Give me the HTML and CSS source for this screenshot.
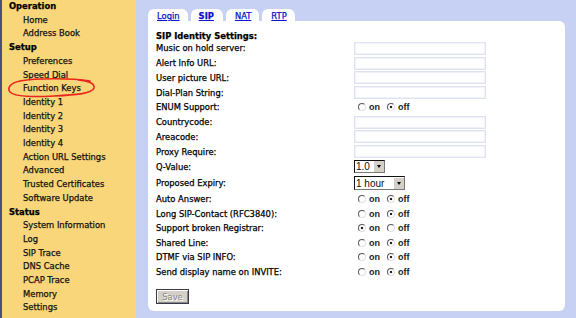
FILE: index.html
```html
<!DOCTYPE html>
<html lang="en">
<head>
    <meta charset="UTF-8">
    <title>SIP Identity Settings</title>
    <link rel="stylesheet" href="styles.css">
</head>
<body>
    <div class="page">
        <nav class="sidebar">
            <div class="group">Operation</div>
            <a class="item">Home</a>
            <a class="item">Address Book</a>
            <div class="group">Setup</div>
            <a class="item">Preferences</a>
            <a class="item">Speed Dial</a>
            <a class="item">Function Keys</a>
            <a class="item">Identity 1</a>
            <a class="item">Identity 2</a>
            <a class="item">Identity 3</a>
            <a class="item">Identity 4</a>
            <a class="item">Action URL Settings</a>
            <a class="item">Advanced</a>
            <a class="item">Trusted Certificates</a>
            <a class="item">Software Update</a>
            <div class="group">Status</div>
            <a class="item">System Information</a>
            <a class="item">Log</a>
            <a class="item">SIP Trace</a>
            <a class="item">DNS Cache</a>
            <a class="item">PCAP Trace</a>
            <a class="item">Memory</a>
            <a class="item">Settings</a>

            <!-- hand drawn marker around Function Keys -->
            <svg class="marker" width="92" height="24" viewBox="0 0 92 24">
                <path d="M84 5 C66 2 30 2 14 5 C4 7 1 12 4 16 C9 21 30 21 48 20 C68 19 86 18 88 12 C89 7 82 5 72 4" fill="none" stroke="#e8261c" stroke-width="1.6" stroke-linecap="round"/>
            </svg>
        </nav>

        <main class="content">
            <div class="tabs">
                <a class="tab">Login</a>
                <a class="tab active">SIP</a>
                <a class="tab">NAT</a>
                <a class="tab">RTP</a>
            </div>

            <div class="panel">
                <h2>SIP Identity Settings:</h2>

                <div class="row"><label>Music on hold server:</label><input class="field" type="text"></div>
                <div class="row"><label>Alert Info URL:</label><input class="field" type="text"></div>
                <div class="row"><label>User picture URL:</label><input class="field" type="text"></div>
                <div class="row"><label>Dial-Plan String:</label><input class="field" type="text"></div>
                <div class="row"><label>ENUM Support:</label>
                    <span class="choice"><input type="radio" name="enum"><span class="on">on</span><input type="radio" name="enum" checked><span>off</span></span>
                </div>
                <div class="row"><label>Countrycode:</label><input class="field" type="text"></div>
                <div class="row"><label>Areacode:</label><input class="field" type="text"></div>
                <div class="row"><label>Proxy Require:</label><input class="field" type="text"></div>
                <div class="row q"><label>Q-Value:</label>
                    <span class="select small"><span>1.0</span><i></i></span>
                </div>
                <div class="row exp"><label>Proposed Expiry:</label>
                    <span class="select wide"><span>1 hour</span><i></i></span>
                </div>
                <div class="row"><label>Auto Answer:</label>
                    <span class="choice"><input type="radio" name="auto"><span class="on">on</span><input type="radio" name="auto" checked><span>off</span></span>
                </div>
                <div class="row"><label>Long SIP-Contact (RFC3840):</label>
                    <span class="choice"><input type="radio" name="long"><span class="on">on</span><input type="radio" name="long" checked><span>off</span></span>
                </div>
                <div class="row"><label>Support broken Registrar:</label>
                    <span class="choice"><input type="radio" name="reg" checked><span class="on">on</span><input type="radio" name="reg"><span>off</span></span>
                </div>
                <div class="row"><label>Shared Line:</label>
                    <span class="choice"><input type="radio" name="shared"><span class="on">on</span><input type="radio" name="shared" checked><span>off</span></span>
                </div>
                <div class="row"><label>DTMF via SIP INFO:</label>
                    <span class="choice"><input type="radio" name="dtmf"><span class="on">on</span><input type="radio" name="dtmf" checked><span>off</span></span>
                </div>
                <div class="row"><label>Send display name on INVITE:</label>
                    <span class="choice"><input type="radio" name="disp"><span class="on">on</span><input type="radio" name="disp" checked><span>off</span></span>
                </div>

                <button class="save" disabled>Save</button>
            </div>
        </main>
    </div>
</body>
</html>
```

FILE: styles.css
```css
body {
    margin: 0;
    font-family: 'DejaVu Sans', Verdana, sans-serif;
    font-size: 8.4px;
    color: #000;
    -webkit-text-stroke: 0.25px currentColor;
}

.page {
    display: flex;
    width: 576px;
    height: 318px;
    overflow: hidden;
}

/* left menu */
.sidebar {
    position: relative;
    width: 134px;
    flex-shrink: 0;
    background-color: #f9d67a;
    border-left: 2px solid #46507a;
}

.group,
.item {
    display: block;
    line-height: 13.7px;
    white-space: nowrap;
}

.group {
    font-weight: bold;
    padding-left: 7px;
    color: #000;
}

.item {
    padding-left: 21px;
    color: #111;
}

.marker {
    position: absolute;
    left: 4px;
    top: 76px;
}

/* right side */
.content {
    flex: 1;
    background-color: #c6d1f4;
    padding: 9px 11px 7px 12px;
    display: flex;
    flex-direction: column;
}

.tabs {
    display: flex;
    gap: 3px;
    height: 12px;
}

.tab {
    background-color: #fff;
    border-radius: 6px 6px 0 0;
    padding: 0 8px 0 9px;
    line-height: 14px;
    color: #0a14c8;
    text-decoration: underline;
}

.tab.active {
    font-weight: bold;
    padding: 0 9px 0 8px;
}

.panel {
    flex: 1;
    background-color: #fff;
    border-radius: 0 6px 6px 6px;
    padding: 10px 0 0 8px;
}

h2 {
    margin: 0;
    font-size: 8.4px;
    font-weight: bold;
    line-height: 10px;
}

.row {
    display: flex;
    align-items: center;
    height: 14.75px;
}

.row.q {
    height: 15px;
}

.row.exp {
    height: 18px;
}

.row:nth-of-type(n+11) {
    height: 14.5px;
}

.row label {
    width: 198px;
    flex-shrink: 0;
}

.field {
    width: 132px;
    height: 13px;
    box-sizing: border-box;
    margin: 0;
    padding: 0;
    border: 1px solid #dde1f0;
    box-shadow: inset 0 0 0 1px #f1f3fa;
    background: #fff;
}

.choice {
    display: flex;
    align-items: center;
    padding-left: 4px;
    font-family: 'Liberation Sans', Arial, sans-serif;
    font-size: 9px;
    font-weight: bold;
    color: #222;
    -webkit-text-stroke: 0;
}

.choice input {
    appearance: none;
    margin: 0;
    width: 8px;
    height: 8px;
    border-radius: 50%;
    border: 1px solid;
    border-color: #5a5a5a #e0e0e0 #e0e0e0 #5a5a5a;
    background: #fff;
    box-sizing: border-box;
}

.choice input:checked {
    background: radial-gradient(circle, #222 0 1.3px, #fff 1.6px);
}

.choice span {
    margin-left: 3px;
}

.choice .on {
    margin-right: 7px;
}

.select {
    display: flex;
    align-items: center;
    height: 13px;
    box-sizing: border-box;
    border: 1px solid #111;
    border-right-color: #777;
    border-bottom-color: #777;
    font-family: 'Liberation Sans', Arial, sans-serif;
    font-size: 10px;
    color: #111;
    background: #fff;
    -webkit-text-stroke: 0;
}

.select span {
    flex: 1;
    padding-left: 1px;
}

.select i {
    width: 11px;
    height: 11px;
    background: #d4d0c8;
    border-left: 1px solid #fff;
    box-sizing: border-box;
    position: relative;
}

.select i::after {
    content: '';
    position: absolute;
    left: 3px;
    top: 4px;
    border-left: 2.5px solid transparent;
    border-right: 2.5px solid transparent;
    border-top: 3px solid #000;
}

.select.small {
    width: 31px;
}

.select.wide {
    width: 51px;
    height: 14px;
}

.save {
    margin-top: 10px;
    width: 33px;
    height: 15px;
    padding: 0;
    font-family: 'DejaVu Sans', Verdana, sans-serif;
    font-size: 8.4px;
    color: #888;
    text-shadow: 1px 1px 0 #fff;
    -webkit-text-stroke: 0;
    background-color: #d4d0c8;
    border: 1px solid #3a3a4a;
    box-shadow: inset 1px 1px 0 #fff, inset -1px -1px 0 #888;
}
```
